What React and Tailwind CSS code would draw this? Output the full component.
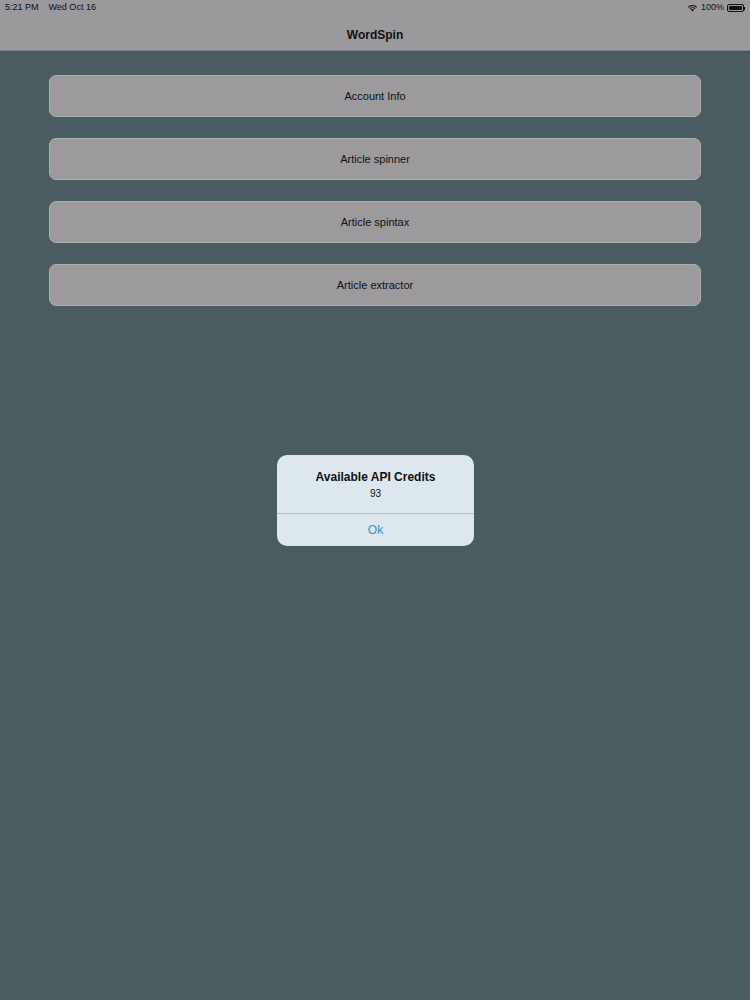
import React from "react";

const items = ["Account Info", "Article spinner", "Article spintax", "Article extractor"];

export default function App() {
  return (
    <div
      className="relative w-[750px] h-[1000px] bg-[#4a5c5f] overflow-hidden"
      style={{ fontFamily: '"Liberation Sans", Arial, sans-serif' }}
    >
      {/* Header */}
      <header className="h-[51px] bg-[#9b999c] border-b border-[#7d8a8c] relative">
        <div className="flex items-center justify-between px-[5px] pt-[2px] h-[14px] text-[9px] text-[#111]">
          <div className="flex gap-[10px]">
            <span>5:21 PM</span>
            <span>Wed Oct 16</span>
          </div>
          <div className="flex items-center gap-[3px]">
            <svg width="11" height="8" viewBox="0 0 12 9">
              <path d="M6 8.5 L4.2 6.6 A2.6 2.6 0 0 1 7.8 6.6 Z" fill="#111" />
              <path d="M2.6 5 A4.8 4.8 0 0 1 9.4 5 L8.5 5.9 A3.5 3.5 0 0 0 3.5 5.9 Z" fill="#111" />
              <path d="M0.8 3.2 A7.4 7.4 0 0 1 11.2 3.2 L10.3 4.1 A6.1 6.1 0 0 0 1.7 4.1 Z" fill="#111" />
            </svg>
            <span>100%</span>
            <div className="flex items-center">
              <div className="w-[17px] h-[8px] rounded-[2px] border border-[#111] p-[1px]">
                <div className="w-full h-full bg-[#111] rounded-[1px]" />
              </div>
              <div className="w-[1px] h-[3px] bg-[#111]" />
            </div>
          </div>
        </div>
        <div className="text-center text-[12px] font-bold text-[#111] mt-[12px]">WordSpin</div>
      </header>

      {/* Buttons */}
      <div className="flex flex-col gap-[21px] px-[49px] pt-[24px]">
        {items.map((t) => (
          <div
            key={t}
            className="h-[42px] rounded-[7px] bg-[#9c9a9d] border border-[#a9aeae] flex items-center justify-center text-[11px] text-[#111]"
          >
            {t}
          </div>
        ))}
      </div>

      {/* Alert */}
      <div className="absolute left-[277px] top-[455px] w-[197px] rounded-[10px] bg-[#dde8ee] overflow-hidden">
        <div className="pt-[15px] pb-[13px] text-center text-[#111]">
          <div className="text-[12px] font-bold leading-[15px]">Available API Credits</div>
          <div className="text-[10px] leading-[13px] mt-[2px]">93</div>
        </div>
        <div className="h-[1px] bg-[#b6c0c4]" />
        <div className="h-[32px] flex items-center justify-center text-[12px] text-[#2f8fd9]">Ok</div>
      </div>
    </div>
  );
}
